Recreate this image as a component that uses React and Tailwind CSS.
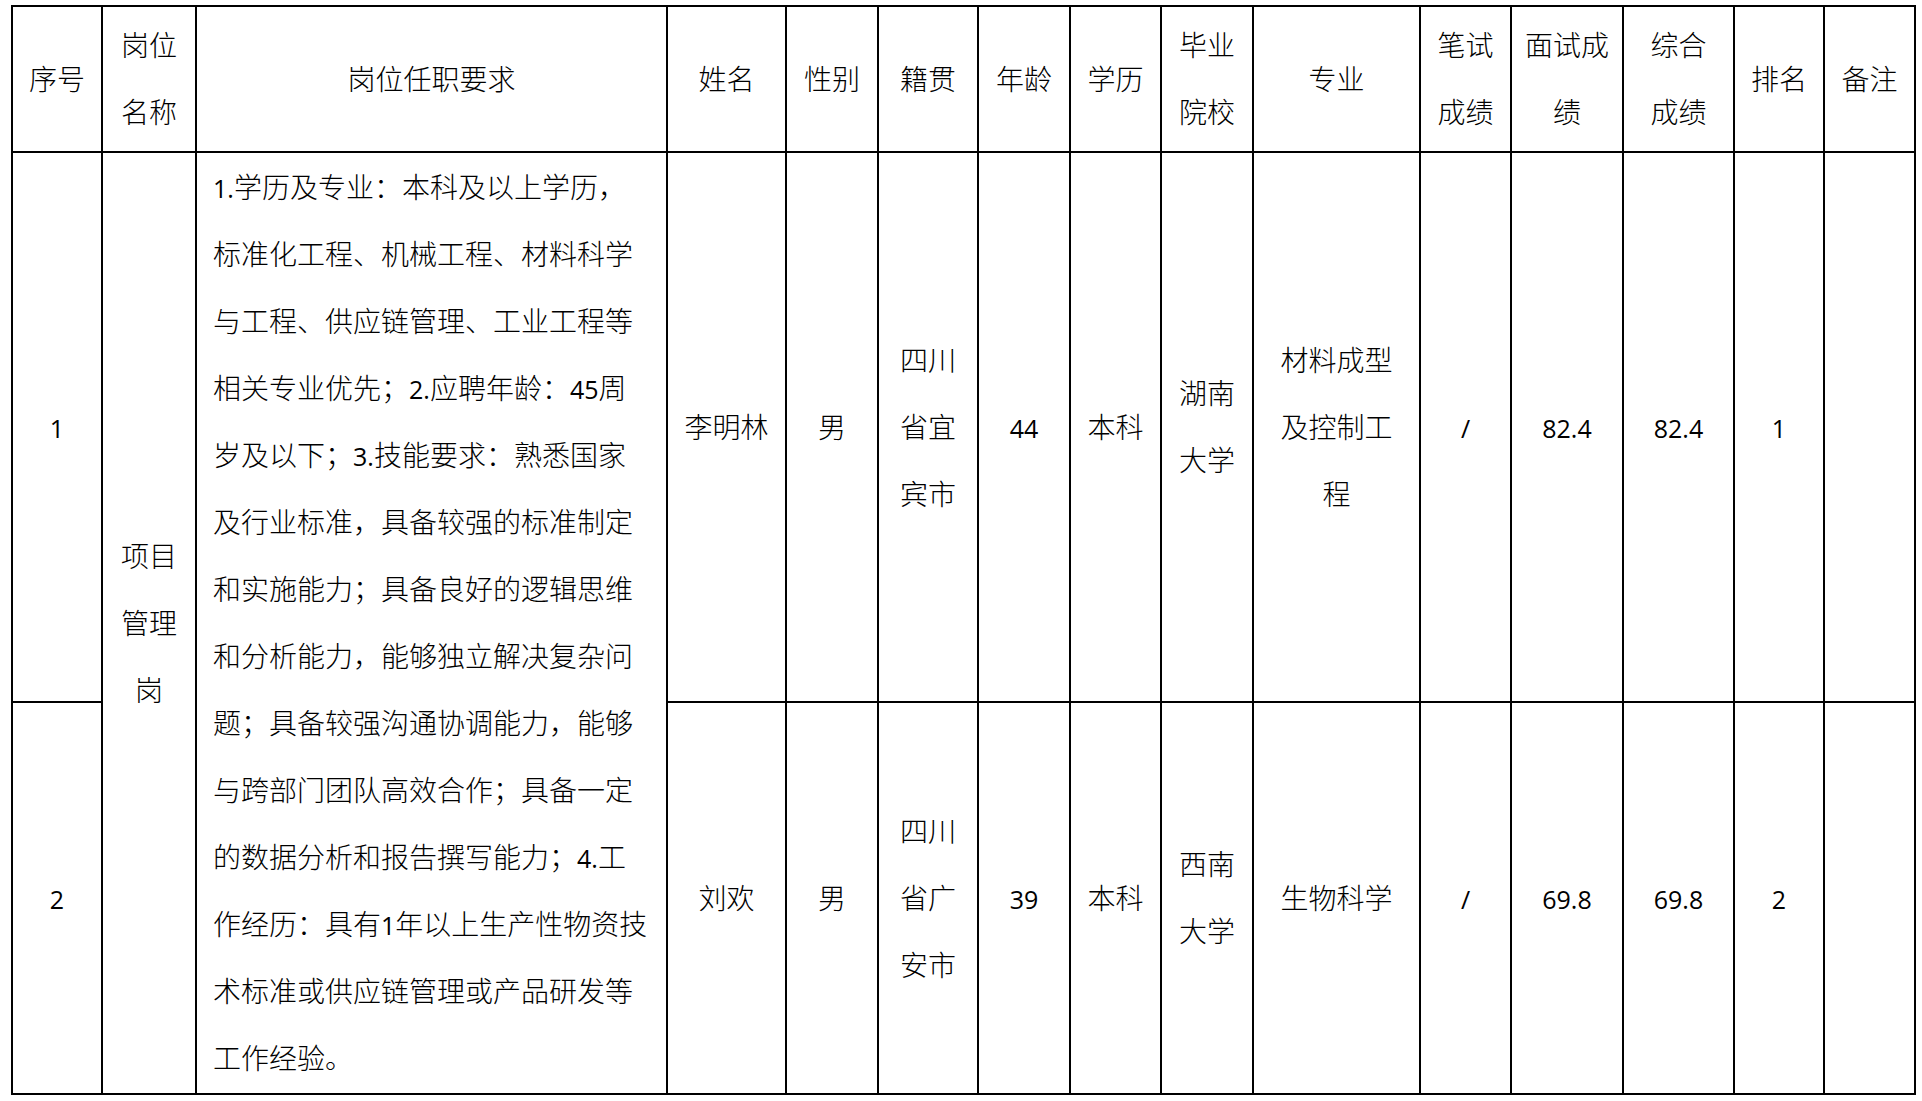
import React from 'react';

const cols = [90, 94, 471, 119, 92, 100, 92, 91, 92, 167, 91, 112, 111, 90, 91];

const header = [
  ['序号'],
  ['岗位', '名称'],
  ['岗位任职要求'],
  ['姓名'],
  ['性别'],
  ['籍贯'],
  ['年龄'],
  ['学历'],
  ['毕业', '院校'],
  ['专业'],
  ['笔试', '成绩'],
  ['面试成', '绩'],
  ['综合', '成绩'],
  ['排名'],
  ['备注'],
];

const requirement = [
  '1.学历及专业：本科及以上学历，',
  '标准化工程、机械工程、材料科学',
  '与工程、供应链管理、工业工程等',
  '相关专业优先；2.应聘年龄：45周',
  '岁及以下；3.技能要求：熟悉国家',
  '及行业标准，具备较强的标准制定',
  '和实施能力；具备良好的逻辑思维',
  '和分析能力，能够独立解决复杂问',
  '题；具备较强沟通协调能力，能够',
  '与跨部门团队高效合作；具备一定',
  '的数据分析和报告撰写能力；4.工',
  '作经历：具有1年以上生产性物资技',
  '术标准或供应链管理或产品研发等',
  '工作经验。',
];

const rows = [
  {
    no: '1',
    name: ['李明林'],
    sex: '男',
    origin: ['四川', '省宜', '宾市'],
    age: '44',
    edu: '本科',
    school: ['湖南', '大学'],
    major: ['材料成型', '及控制工', '程'],
    written: '/',
    interview: '82.4',
    total: '82.4',
    rank: '1',
    h: 'h-[550px]',
  },
  {
    no: '2',
    name: ['刘欢'],
    sex: '男',
    origin: ['四川', '省广', '安市'],
    age: '39',
    edu: '本科',
    school: ['西南', '大学'],
    major: ['生物科学'],
    written: '/',
    interview: '69.8',
    total: '69.8',
    rank: '2',
    h: 'h-[392px]',
  },
];

// latin runs are set a little smaller so Open Sans sits like Calibri next to the CJK
const Mixed = ({ text }) =>
  text.split(/([0-9./]+)/).map((part, i) =>
    /^[0-9./]+$/.test(part) ? (
      <span key={i} className="text-[25px] font-normal leading-none">{part}</span>
    ) : (
      <span key={i}>{part}</span>
    )
  );

const Lines = ({ lines }) => (
  <div className="flex flex-col items-center">
    {lines.map((l) => (
      <div key={l} className="h-[67px] overflow-visible whitespace-nowrap leading-[67px]">
        <Mixed text={l} />
      </div>
    ))}
  </div>
);

const cell = 'border-2 border-black align-middle text-center p-0';

export default function App() {
  return (
    <div className="min-h-screen bg-white pt-[5px] pl-[11px] text-black text-[28px] font-light font-['Open_Sans','Noto_Sans_CJK_SC',sans-serif]">
      <table className="table-fixed border-collapse border-2 border-black w-[1903px]">
        <colgroup>
          {cols.map((w, i) => (
            <col key={i} style={{ width: w }} />
          ))}
        </colgroup>
        <thead>
          <tr className="h-[146px]">
            {header.map((lines, i) => (
              <th key={i} className={`${cell} font-light`}>
                <Lines lines={lines} />
              </th>
            ))}
          </tr>
        </thead>
        <tbody>
          {rows.map((r, idx) => (
            <tr key={r.no} className={r.h}>
              <td className={cell}>
                <Lines lines={[r.no]} />
              </td>
              {idx === 0 && (
                <>
                  <td rowSpan={2} className={cell}>
                    <Lines lines={['项目', '管理', '岗']} />
                  </td>
                  <td rowSpan={2} className={`${cell} text-left pl-4`}>
                    {requirement.map((l) => (
                      <div key={l} className="h-[67px] whitespace-nowrap leading-[67px]">
                        <Mixed text={l} />
                      </div>
                    ))}
                  </td>
                </>
              )}
              <td className={cell}><Lines lines={r.name} /></td>
              <td className={cell}><Lines lines={[r.sex]} /></td>
              <td className={cell}><Lines lines={r.origin} /></td>
              <td className={cell}><Lines lines={[r.age]} /></td>
              <td className={cell}><Lines lines={[r.edu]} /></td>
              <td className={cell}><Lines lines={r.school} /></td>
              <td className={cell}><Lines lines={r.major} /></td>
              <td className={cell}><Lines lines={[r.written]} /></td>
              <td className={cell}><Lines lines={[r.interview]} /></td>
              <td className={cell}><Lines lines={[r.total]} /></td>
              <td className={cell}><Lines lines={[r.rank]} /></td>
              <td className={cell}></td>
            </tr>
          ))}
        </tbody>
      </table>
    </div>
  );
}
